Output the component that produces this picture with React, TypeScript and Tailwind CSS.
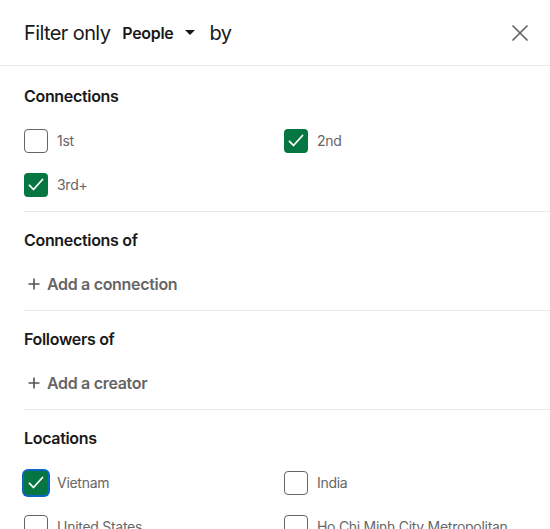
import React from "react";

type Option = { label: string; checked?: boolean; focused?: boolean };

const CONNECTIONS: Option[] = [
  { label: "1st" },
  { label: "2nd", checked: true },
  { label: "3rd+", checked: true },
];

const LOCATIONS: Option[] = [
  { label: "Vietnam", checked: true, focused: true },
  { label: "India" },
  { label: "United States" },
  { label: "Ho Chi Minh City Metropolitan Area" },
  { label: "Hanoi Capital Region" },
  { label: "Singapore" },
];

function Checkbox({ checked, focused }: { checked?: boolean; focused?: boolean }) {
  return (
    <span
      className={`relative block h-6 w-6 shrink-0 rounded-[4px] ${
        checked ? "bg-[#057642]" : "border-[1.5px] border-[#666666] bg-white"
      } ${focused ? "ring-2 ring-[#0a66c2]" : ""}`}
    >
      {checked && (
        <svg className="absolute inset-0" width="24" height="24" viewBox="0 0 24 24" fill="none">
          <path d="M5.5 12.3l4 4.2L18.5 6.5" stroke="white" strokeWidth="1.8" strokeLinecap="round" strokeLinejoin="round" />
        </svg>
      )}
    </span>
  );
}

function CheckList({ options }: { options: Option[] }) {
  return (
    <div className="grid grid-cols-[260px_230px] gap-y-5">
      {options.map((o) => (
        <label key={o.label} className="flex items-start gap-[9px]">
          <Checkbox checked={o.checked} focused={o.focused} />
          <span className="text-[14px] leading-6 tracking-[-0.02em] text-[#666666]">{o.label}</span>
        </label>
      ))}
    </div>
  );
}

function AddButton({ label }: { label: string }) {
  return (
    <button className="flex h-6 items-center gap-[7px] pl-1 text-[16px] font-semibold tracking-[-0.02em] text-[#666666]">
      <svg width="12" height="12" viewBox="0 0 12 12" fill="none">
        <path d="M6 0.5v11M0.5 6h11" stroke="#555555" strokeWidth="1.6" />
      </svg>
      {label}
    </button>
  );
}

function Section({ title, children, first, last }: { title: string; children: React.ReactNode; first?: boolean; last?: boolean }) {
  return (
    <section className={`ml-6 ${last ? "" : "border-b border-[#e8e8e8] pb-[14px]"} ${first ? "pt-[18px]" : "pt-4"}`}>
      <h3 className="h-6 text-[16px] font-semibold leading-6 tracking-[-0.02em] text-[#191919]">{title}</h3>
      <div className={first || last ? "mt-[21px]" : "mt-5"}>{children}</div>
    </section>
  );
}

export default function App() {
  return (
    <div className="min-h-screen w-[550px] bg-white font-['Inter',sans-serif] antialiased">
      <header className="flex h-[66px] items-center border-b border-[#e8e8e8] pl-6 pr-[14px]">
        <span className="text-[20px] tracking-[-0.03em] text-[#191919]">Filter only</span>
        <button className="ml-3 flex items-center gap-3 text-[16px] font-semibold tracking-[-0.02em] text-[#191919]">
          People
          <svg width="10" height="5" viewBox="0 0 10 5">
            <path d="M0 0h10L5 5z" fill="#191919" />
          </svg>
        </button>
        <span className="ml-[14px] text-[20px] tracking-[-0.03em] text-[#191919]">by</span>
        <button className="ml-auto grid h-8 w-8 place-items-center">
          <svg width="18" height="18" viewBox="0 0 18 18" fill="none">
            <path d="M1.5 1.5l15 15M16.5 1.5l-15 15" stroke="#666666" strokeWidth="1.7" />
          </svg>
        </button>
      </header>

      <Section title="Connections" first>
        <CheckList options={CONNECTIONS} />
      </Section>

      <Section title="Connections of">
        <AddButton label="Add a connection" />
      </Section>

      <Section title="Followers of">
        <AddButton label="Add a creator" />
      </Section>

      <Section title="Locations" last>
        <CheckList options={LOCATIONS} />
      </Section>
    </div>
  );
}
